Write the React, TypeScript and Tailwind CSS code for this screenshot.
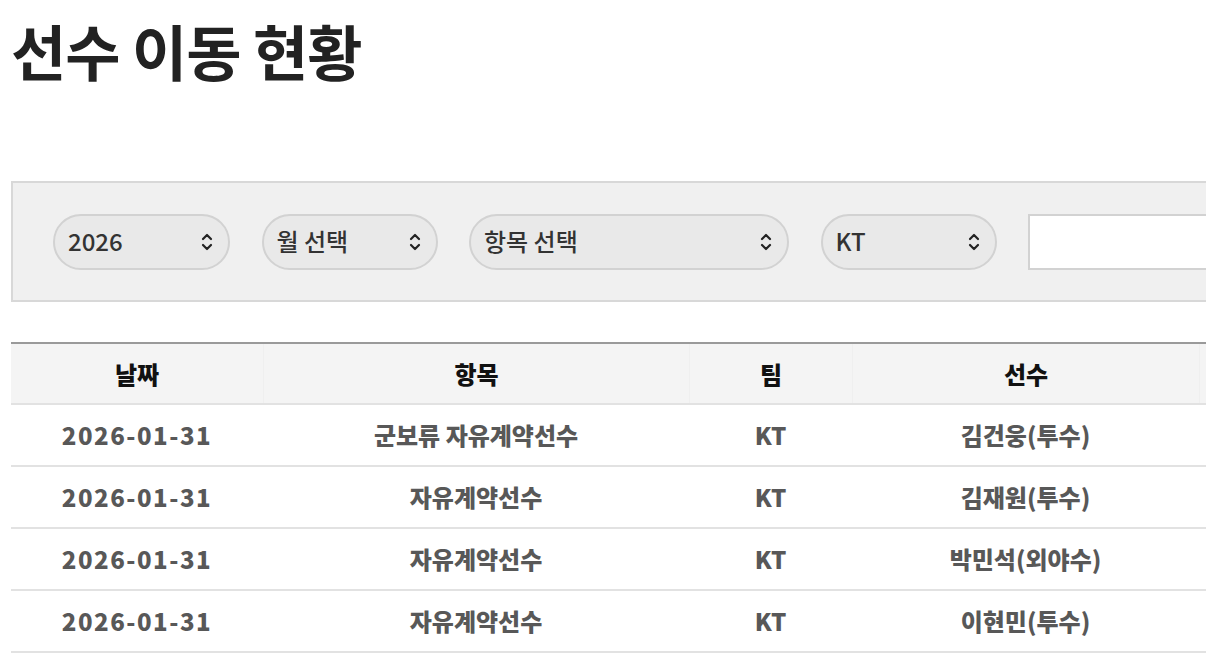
import React from "react";

const font = { fontFamily: '"Noto Sans CJK KR", "Noto Sans", sans-serif' };

function Chevron() {
  return (
    <svg width="14" height="22" viewBox="0 0 14 22" fill="none" stroke="#222" strokeWidth="2.2" strokeLinecap="round" strokeLinejoin="round">
      <path d="M3 8 L7 4 L11 8" />
      <path d="M3 14 L7 18 L11 14" />
    </svg>
  );
}

function Select({ label, w }: { label: string; w: string }) {
  return (
    <div className={`${w} h-[56px] shrink-0 rounded-full border-2 border-[#d2d2d2] bg-[#e9e9e9] flex items-center justify-between pl-[13px] pr-[14px]`}>
      <span className="text-[24px] font-medium text-[#333] leading-none -mt-[2px]">{label}</span>
      <Chevron />
    </div>
  );
}

const rows = [
  ["2026-01-31", "군보류 자유계약선수", "KT", "김건웅(투수)"],
  ["2026-01-31", "자유계약선수", "KT", "김재원(투수)"],
  ["2026-01-31", "자유계약선수", "KT", "박민석(외야수)"],
  ["2026-01-31", "자유계약선수", "KT", "이현민(투수)"],
];

export default function App() {
  return (
    <div className="w-[1206px] h-[657px] overflow-hidden bg-white" style={font}>
      <div className="pl-[11px] w-[1500px]">
        <h1 className="text-[60px] font-bold text-[#222] leading-none pt-[20px] tracking-[-1px]">선수 이동 현황</h1>
        <div className="mt-[101px] h-[121px] border-2 border-[#d8d8d8] bg-[#f0f0f0] flex items-center gap-[31.5px] pl-[40px]">
          <Select label="2026" w="w-[177px]" />
          <Select label="월 선택" w="w-[176px]" />
          <Select label="항목 선택" w="w-[320px]" />
          <Select label="KT" w="w-[176px]" />
          <div className="w-[300px] h-[56px] shrink-0 border-2 border-[#d2d2d2] bg-white" />
        </div>
        <div className="mt-[40px] w-[1400px] border-t-2 border-[#9a9a9a]">
          <div className="grid grid-cols-[252px_426px_163px_347px_212px] h-[61px] bg-[#f4f4f4] border-b-2 border-[#e2e2e2] text-[#111] text-[24px] font-black">
            {["날짜", "항목", "팀", "선수", ""].map((h, i) => (
              <div key={i} className={`flex items-center justify-center ${i > 0 ? "border-l border-[#efefef]" : ""}`}>{h}</div>
            ))}
          </div>
          {rows.map((r, i) => (
            <div key={i} className="grid grid-cols-[252px_426px_163px_347px_212px] h-[62px] border-b-2 border-[#e2e2e2] text-[#585858] text-[24px] font-black">
              <div className="flex items-center justify-center tracking-[1.5px]">{r[0]}</div>
              <div className="flex items-center justify-center">{r[1]}</div>
              <div className="flex items-center justify-center">{r[2]}</div>
              <div className="flex items-center justify-center">{r[3]}</div>
              <div />
            </div>
          ))}
        </div>
      </div>
    </div>
  );
}
